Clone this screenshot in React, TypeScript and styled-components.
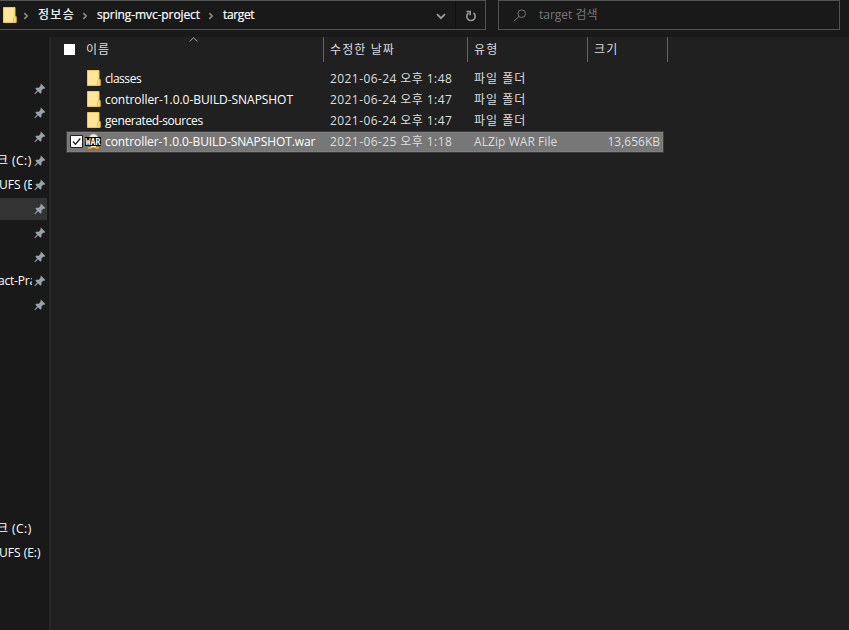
import React from "react";
import styled, { createGlobalStyle } from "styled-components";

const Global = createGlobalStyle`
  * { box-sizing: border-box; }
  body { margin: 0; background: #202020; }
`;

const Window = styled.div`
  width: 849px;
  height: 630px;
  overflow: hidden;
  display: flex;
  flex-direction: column;
  background: #191919;
  color: #fff;
  font: 12px/20px "Open Sans", "Noto Sans CJK KR", sans-serif;
  white-space: pre;
`;

const Label = styled.span<{ $track?: number }>`
  letter-spacing: ${(p) => p.$track ?? 0}px;
`;

const TopBar = styled.div`
  display: flex;
  gap: 12px;
  height: 30px;
  margin-bottom: 7px;
  flex: none;
`;

const AddressBar = styled.div`
  display: flex;
  align-items: center;
  width: 486px;
  border: 1px solid #535353;
  border-left: 0;
`;

const Crumb = styled.div<{ $width: number }>`
  width: ${(p) => p.$width}px;
  flex: none;
  height: 20px;
  -webkit-text-stroke: 0.2px #fff;
`;

const CrumbArrow = styled.svg`
  width: 6px;
  height: 8px;
  flex: none;
  margin-right: 9px;
  margin-top: 2px;
`;

const AddressFolder = styled.div`
  display: flex;
  width: 23px;
  padding: 0 0 1px 3px;
  flex: none;
`;

const Dropdown = styled.div`
  margin-left: auto;
  width: 29px;
  height: 28px;
  display: flex;
  align-items: center;
  justify-content: center;
  padding-top: 3px;
  border-right: 1px solid #111;
`;

const Refresh = styled(Dropdown)`
  margin: 0;
  width: 29px;
  border: 0;
  padding-top: 2px;
`;

const SearchBox = styled.div`
  display: flex;
  align-items: center;
  width: 342px;
  padding-left: 14px;
  gap: 12px;
  border: 1px solid #535353;
  color: #777;
`;

const Body = styled.div`
  display: flex;
  flex: 1;
  min-height: 0;
`;

const Sidebar = styled.div`
  width: 51px;
  flex: none;
  padding-top: 41px;
  border-right: 2px solid #262626;
`;

const NavRow = styled.div<{ $active?: boolean }>`
  display: flex;
  align-items: center;
  width: 47px;
  height: 22px;
  margin-bottom: 2px;
  background: ${(p) => (p.$active ? "#333" : "transparent")};
`;

const NavText = styled.div<{ $width: number; $shift: number }>`
  width: ${(p) => p.$width}px;
  height: 20px;
  flex: none;
  overflow: hidden;
  text-indent: ${(p) => p.$shift}px;
`;

const PinSlot = styled.div`
  display: flex;
  margin-left: 2px;
`;

const Drives = styled.div`
  margin-top: 202px;
`;

const Main = styled.div`
  flex: 1;
  background: #202020;
`;

const Header = styled.div`
  display: flex;
  height: 25px;
  width: 617px;
  color: #dedede;
`;

const HeadCell = styled.div<{ $width: number }>`
  width: ${(p) => p.$width}px;
  padding: 3px 0 0 6px;
  border-right: 1px solid #636363;
`;

const NameHead = styled(HeadCell)`
  display: flex;
  position: relative;
  padding-left: 13px;
`;

const HeadCheck = styled.div`
  width: 11px;
  height: 11px;
  margin: 4px 11px 0 0;
  background: #fff;
`;

const SortArrow = styled.svg`
  position: absolute;
  left: 138px;
  top: 0;
`;

const Rows = styled.div`
  padding: 6px 0 0 15px;
`;

const Row = styled.div<{ $selected?: boolean }>`
  display: flex;
  align-items: center;
  width: 598px;
  height: ${(p) => (p.$selected ? 22 : 21)}px;
  border: 1px solid ${(p) => (p.$selected ? "#3c3c3c" : "transparent")};
  box-shadow: ${(p) => (p.$selected ? "inset 0 0 0 1px #808080" : "none")};
  background: ${(p) => (p.$selected ? "#777" : "transparent")};
`;

const CheckSlot = styled.div`
  width: 18px;
  padding: 0 0 1px 3px;
  display: flex;
`;

const IconSlot = styled.div<{ $folder: boolean }>`
  width: 20px;
  padding: ${(p) => (p.$folder ? "0 0 1px 2px" : "0 0 1px")};
  display: flex;
`;

const Cell = styled.div<{ $width: number; $dim?: boolean; $right?: boolean }>`
  width: ${(p) => p.$width}px;
  height: 20px;
  flex: none;
  text-align: ${(p) => (p.$right ? "right" : "left")};
  color: ${(p) => (p.$dim ? "#dedede" : "#fff")};
`;

const Folder = () => (
  <svg width="14" height="16" viewBox="0 0 14 16">
    <path d="M.5.5h11.5v9h1v6H.5z" fill="#ffe08a" stroke="#f0c850" />
    <path d="M1 1h10v13H1z" fill="#ffe699" />
    <path d="M11.5 9.5h1.5v6h-2.5v-4z" fill="#ffe08a" stroke="#e9bd3d" />
  </svg>
);

const Pin = () => (
  <svg width="12" height="12" viewBox="0 0 12 12">
    <path
      d="M6.8.8l4.4 4.1-1 .8-.9-.1-2 2 .1 2-1 .8-2.3-2.2L1 11.2l-.5-.3 2.7-3.5L1.5 5.6l1-.8 2.1.1 2-1.8z"
      fill="#98a4ad"
      stroke="#98a4ad"
      strokeWidth=".3"
    />
  </svg>
);

const WarFile = () => (
  <svg width="17" height="17" viewBox="0 0 17 17">
    <ellipse cx="8.5" cy="7.6" rx="5.4" ry="6.9" fill="#f0ead7" stroke="#91866c" strokeWidth=".7" />
    <path d="M3 13.5h3l2 1.5h1l2-1.5h3l1 2.8h-4l-1-1H7l-1 1H2z" fill="#e8a331" stroke="#8d5d19" strokeWidth=".6" />
    <path d="M6 13h5v1.5H6z" fill="#eee6cf" />
    <path d="M0 4h16v9H0z" fill="#050505" />
    <text
      x=".6"
      y="11.8"
      textLength="15"
      lengthAdjust="spacingAndGlyphs"
      fill="#fff"
      fontFamily="DejaVu Sans Mono"
      fontWeight="700"
      fontSize="9"
    >
      WAR
    </text>
  </svg>
);

const Checked = () => (
  <svg width="13" height="13" viewBox="0 0 13 13">
    <path d="M.5.5h12v12H.5z" fill="#fff" stroke="#222" />
    <path d="M3 6.5l2.5 2.7L10.3 3.5" fill="none" stroke="#222" strokeWidth="1.3" />
  </svg>
);

const Arrow = () => (
  <CrumbArrow viewBox="0 0 6 8">
    <path d="M1.3 1.2L4.2 4 1.3 6.8" fill="none" stroke="#8a8a8a" strokeWidth="1.6" />
  </CrumbArrow>
);

const pinned = [
  { text: "" },
  { text: "" },
  { text: "" },
  { text: "크 (C:)", shift: -3, track: 0.45 },
  { text: "UFS (E:)", shift: -1, track: 0 },
  { text: "", active: true },
  { text: "" },
  { text: "" },
  { text: "act-Practice", shift: -2, track: -0.2 },
  { text: "" },
];

const files = [
  { name: "classes", track: -0.45, date: "2021-06-24 오후 1:48" },
  { name: "controller-1.0.0-BUILD-SNAPSHOT", track: -0.05, date: "2021-06-24 오후 1:47" },
  { name: "generated-sources", track: -0.4, date: "2021-06-24 오후 1:47" },
  { name: "controller-1.0.0-BUILD-SNAPSHOT.war", track: -0.09, date: "2021-06-25 오후 1:18", war: true },
];

export default function App() {
  return (
    <Window>
      <Global />
      <TopBar>
        <AddressBar>
          <AddressFolder><Folder /></AddressFolder>
          <Arrow />
          <Crumb $width={44}><Label $track={1.3}>정보승</Label></Crumb>
          <Arrow />
          <Crumb $width={111}><Label $track={-0.1}>spring-mvc-project</Label></Crumb>
          <Arrow />
          <Crumb $width={60}><Label $track={-0.35}>target</Label></Crumb>
          <Dropdown>
            <svg width="10" height="7" viewBox="0 0 10 7">
              <path d="M1 1.2l4 4 4-4" fill="none" stroke="#999" strokeWidth="1.8" />
            </svg>
          </Dropdown>
          <Refresh>
            <svg width="12" height="12" viewBox="0 0 12 12">
              <path d="M8.5 3a4.2 4.2 0 1 1-5 0M1.5 1.5h3.7v3.7" fill="none" stroke="#999" strokeWidth="1.6" />
            </svg>
          </Refresh>
        </AddressBar>
        <SearchBox>
          <svg width="14" height="13" viewBox="0 0 14 13">
            <circle cx="8.7" cy="4.7" r="3.8" fill="none" stroke="#777" />
            <path d="M6 7.5L.8 12.2" stroke="#777" />
          </svg>
          <Label>target 검색</Label>
        </SearchBox>
      </TopBar>
      <Body>
        <Sidebar>
          {pinned.map((p, i) => (
            <NavRow key={i} $active={p.active}>
              <NavText $width={32} $shift={p.shift ?? 0}>
                <Label $track={p.track}>{p.text}</Label>
              </NavText>
              <PinSlot><Pin /></PinSlot>
            </NavRow>
          ))}
          <Drives>
            <NavRow><NavText $width={47} $shift={-3}><Label $track={0.45}>크 (C:)</Label></NavText></NavRow>
            <NavRow><NavText $width={47} $shift={-1}><Label>UFS (E:)</Label></NavText></NavRow>
          </Drives>
        </Sidebar>
        <Main>
          <Header>
            <NameHead $width={273}>
              <HeadCheck />
              <Label $track={1}>이름</Label>
              <SortArrow width="9" height="5" viewBox="0 0 9 5">
                <path d="M.6 4.4l3.9-3.6 3.9 3.6" fill="none" stroke="#aaa" />
              </SortArrow>
            </NameHead>
            <HeadCell $width={144}><Label $track={1.1}>수정한 날짜</Label></HeadCell>
            <HeadCell $width={120}><Label $track={1.1}>유형</Label></HeadCell>
            <HeadCell $width={80}><Label $track={1.1}>크기</Label></HeadCell>
          </Header>
          <Rows>
            {files.map((f) => (
              <Row key={f.name} $selected={f.war}>
                <CheckSlot>{f.war && <Checked />}</CheckSlot>
                <IconSlot $folder={!f.war}>{f.war ? <WarFile /> : <Folder />}</IconSlot>
                <Cell $width={225}><Label $track={f.track}>{f.name}</Label></Cell>
                <Cell $width={144} $dim><Label $track={0.42}>{f.date}</Label></Cell>
                <Cell $width={100} $dim><Label $track={f.war ? 0.07 : 1}>{f.war ? "ALZip WAR File" : "파일 폴더"}</Label></Cell>
                <Cell $width={86} $dim $right>{f.war && <Label>13,656KB</Label>}</Cell>
              </Row>
            ))}
          </Rows>
        </Main>
      </Body>
    </Window>
  );
}
